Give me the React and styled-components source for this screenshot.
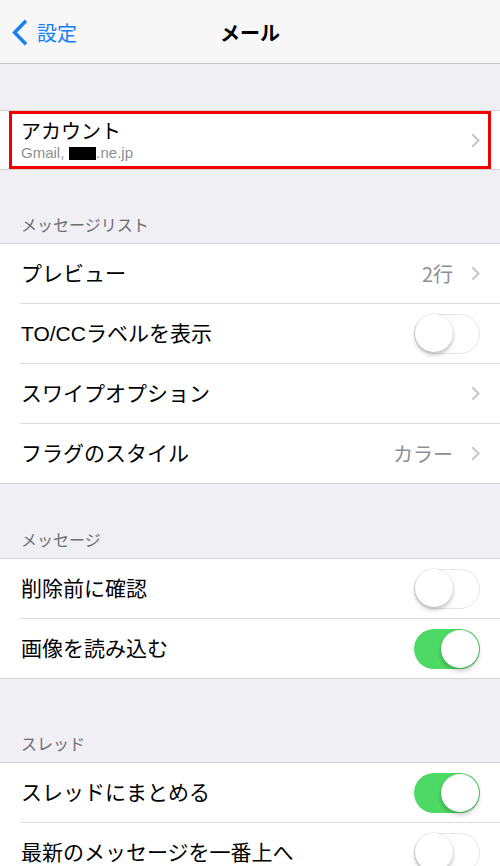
import styled, { createGlobalStyle } from "styled-components"

const GlobalStyle = createGlobalStyle`
  html, body {
    margin: 0;
    padding: 0;
    background: #efeff4;
  }
  body {
    font-family: "Liberation Sans", "Noto Sans CJK JP", sans-serif;
    -webkit-font-smoothing: antialiased;
  }
`

const Page = styled.div`
  width: 500px;
  height: 866px;
  overflow: hidden;
  background: #efeff4;
  display: flex;
  flex-direction: column;
`

const NavBar = styled.header`
  height: 64px;
  flex-shrink: 0;
  background: #f7f7f8;
  border-bottom: 1px solid #c9c9cc;
  display: grid;
  grid-template-columns: 1fr auto 1fr;
  align-items: center;
  padding-top: 2px;
  box-sizing: border-box;
`

const BackButton = styled.div`
  display: flex;
  align-items: center;
  gap: 9px;
  padding-left: 12px;
  color: #157efb;
  font-size: 20px;
  font-family: "Noto Sans CJK JP", sans-serif;
`

const NavTitle = styled.h1`
  margin: 0;
  font-size: 20px;
  font-weight: 700;
  color: #000;
  font-family: "Noto Sans CJK JP", sans-serif;
`

const Spacer = styled.div`
  height: ${p => p.$h}px;
  flex-shrink: 0;
`

const SectionHeader = styled.div`
  height: ${p => p.$h}px;
  flex-shrink: 0;
  display: flex;
  align-items: flex-end;
  padding: 0 0 9px 21px;
  box-sizing: border-box;
  color: #6d6d72;
  font-size: 16px;
  line-height: 20px;
  font-family: "Noto Sans CJK JP", sans-serif;
`

const Group = styled.section`
  background: #fff;
  border-top: 1px solid #d3d3d6;
  border-bottom: 1px solid #d3d3d6;
  flex-shrink: 0;
`

const Row = styled.div`
  position: relative;
  height: ${p => p.$h || 59}px;
  display: flex;
  align-items: center;
  padding: 0 20px 0 21px;
  & + & {
    border-top: 1px solid #dcdcdf;
    margin-left: 20px;
    padding-left: 1px;
  }
`

const Highlight = styled.div`
  position: absolute;
  inset: 0 9px 0 9px;
  border: 3px solid #f20000;
  pointer-events: none;
`

const Label = styled.span`
  flex: 1;
  font-size: 21px;
  color: #000;
  line-height: 26px;
  white-space: nowrap;
`

const AccountText = styled.div`
  flex: 1;
  display: flex;
  flex-direction: column;
  gap: 1px;
  padding-top: 1px;
`

const AccountTitle = styled.span`
  font-size: 20px;
  line-height: 24px;
  color: #000;
  font-family: "Noto Sans CJK JP", sans-serif;
`

const AccountSub = styled.span`
  font-size: 15px;
  line-height: 18px;
  color: #8e8e93;
  display: flex;
  align-items: center;
`

const Redacted = styled.span`
  display: inline-block;
  width: 27px;
  height: 13px;
  background: #000;
  margin-left: 5px;
`

const Value = styled.span`
  font-size: 20px;
  color: #8e8e93;
  margin-right: 18px;
  font-family: "Noto Sans CJK JP", sans-serif;
`

const Toggle = styled.div`
  position: relative;
  width: 66px;
  height: 40px;
  border-radius: 20px;
  box-sizing: border-box;
  background: ${p => (p.$on ? "#4cd964" : "#fff")};
  border: ${p => (p.$on ? "none" : "1.5px solid #e4e4e6")};
  flex-shrink: 0;
  &::after {
    content: "";
    position: absolute;
    top: ${p => (p.$on ? 1 : -0.5)}px;
    left: ${p => (p.$on ? 27 : -0.5)}px;
    width: 38px;
    height: 38px;
    border-radius: 50%;
    background: #fff;
    box-shadow: 0 3px 4px rgba(0, 0, 0, 0.22), 0 0 0 0.5px rgba(0, 0, 0, 0.1);
  }
`

function Chevron() {
  return (
    <svg width="9" height="15" viewBox="0 0 9 15">
      <path d="M1.2 1.2 L7.6 7.5 L1.2 13.8" fill="none" stroke="#c7c7cc" strokeWidth="2" />
    </svg>
  )
}

function BackChevron() {
  return (
    <svg width="16" height="27" viewBox="0 0 16 27">
      <path d="M14 1.8 L2.6 13.5 L14 25.2" fill="none" stroke="#157efb" strokeWidth="3.4" />
    </svg>
  )
}

export default function App() {
  return (
    <Page>
      <GlobalStyle />
      <NavBar>
        <BackButton>
          <BackChevron />
          <span>設定</span>
        </BackButton>
        <NavTitle>メール</NavTitle>
        <div />
      </NavBar>

      <Spacer $h={46} />
      <Group>
        <Row $h={58}>
          <Highlight />
          <AccountText>
            <AccountTitle>アカウント</AccountTitle>
            <AccountSub>
              Gmail,<Redacted />.ne.jp
            </AccountSub>
          </AccountText>
          <Chevron />
        </Row>
      </Group>

      <SectionHeader $h={73}>メッセージリスト</SectionHeader>
      <Group>
        <Row>
          <Label>プレビュー</Label>
          <Value>2行</Value>
          <Chevron />
        </Row>
        <Row>
          <Label>TO/CCラベルを表示</Label>
          <Toggle />
        </Row>
        <Row>
          <Label>スワイプオプション</Label>
          <Chevron />
        </Row>
        <Row>
          <Label>フラグのスタイル</Label>
          <Value>カラー</Value>
          <Chevron />
        </Row>
      </Group>

      <SectionHeader $h={74}>メッセージ</SectionHeader>
      <Group>
        <Row>
          <Label>削除前に確認</Label>
          <Toggle />
        </Row>
        <Row>
          <Label>画像を読み込む</Label>
          <Toggle $on />
        </Row>
      </Group>

      <SectionHeader $h={83}>スレッド</SectionHeader>
      <Group>
        <Row>
          <Label>スレッドにまとめる</Label>
          <Toggle $on />
        </Row>
        <Row>
          <Label>最新のメッセージを一番上へ</Label>
          <Toggle />
        </Row>
      </Group>
    </Page>
  )
}
